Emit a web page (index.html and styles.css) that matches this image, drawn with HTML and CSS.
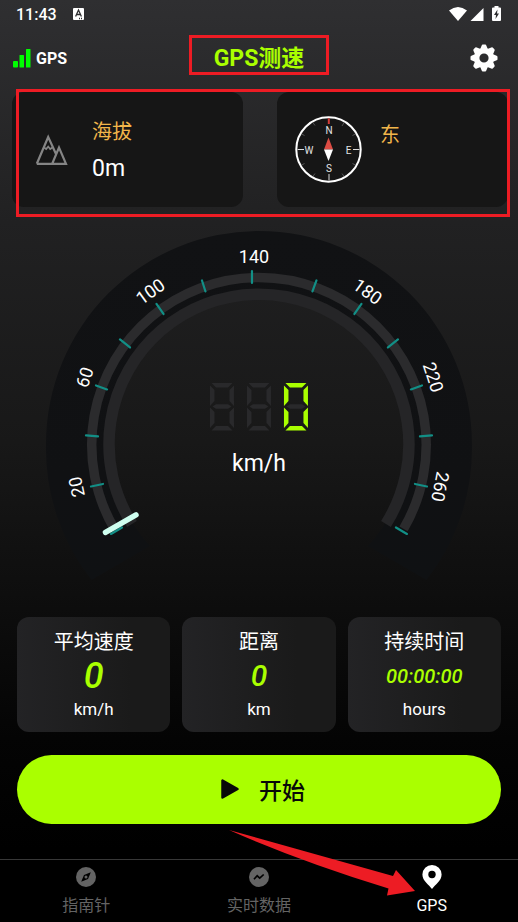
FILE: index.html
```html
<!DOCTYPE html>
<html lang="zh-CN">
<head>
<meta charset="utf-8">
<meta name="viewport" content="width=device-width, initial-scale=1">
<title>GPS测速</title>
<link rel="stylesheet" href="styles.css">
</head>
<body>
<div class="status-bar">
  <span>11:43</span>
  <svg class="status-app" width="12" height="13" viewBox="0 0 12 13" aria-hidden="true"><rect width="11" height="12" rx="1" fill="#fff"/><path d="M2.6 8.500 5.500 2l2.900 6.500M3.700 6.500h3.600M6 10.500h1m1 0h1" fill="none" stroke="#2d2d2f" stroke-width="1.300"/></svg>
  <svg class="status-icons" width="53" height="17" viewBox="0 0 53 17" aria-hidden="true" fill="#fff">
    <path d="M0 4.500Q9 -2.500 18 4.500L9 15z"/>
    <path d="M21.500 15 34.500 2v13z"/>
    <path d="M45.500 0h4v1.500h1.500q1 0 1 1V14q0 1-1 1h-7q-1 0-1-1V2.500q0-1 1-1h1.500z"/>
    <path d="M48.500 3.500 45 9h2l-.5 4L50 7.500h-2z" fill="#2d2d2f"/>
  </svg>
</div>

<header class="header">
  <div class="signal">
    <svg width="18" height="19" viewBox="0 0 18 19" aria-hidden="true" fill="#0f0"><rect y="12" width="5" height="6.500" rx="1"/><rect x="6.500" y="6" width="4.500" height="12.500" rx=".5"/><rect x="13" width="4.500" height="18.500" rx=".5"/></svg>
    <span>GPS</span>
  </div>
  <h1 class="title">GPS测速</h1>
  <button class="settings" type="button" aria-label="设置">
    <svg width="28" height="28" viewBox="-14 -14 28 28" aria-hidden="true">
      <defs><path id="tooth" d="M-4.200 -8 -2.300 -12.600Q-2 -13.500 -1.200 -13.500H1.200Q2 -13.500 2.300 -12.600L4.200 -8z"/></defs>
      <circle r="7.300" fill="none" stroke="#fff" stroke-width="5.400"/>
      <g fill="#fff"><use href="#tooth"/><use href="#tooth" transform="rotate(45)"/><use href="#tooth" transform="rotate(90)"/><use href="#tooth" transform="rotate(135)"/><use href="#tooth" transform="rotate(180)"/><use href="#tooth" transform="rotate(225)"/><use href="#tooth" transform="rotate(270)"/><use href="#tooth" transform="rotate(315)"/></g>
    </svg>
  </button>
</header>

<main>
  <section class="info">
    <article class="info-card altitude">
      <svg width="33" height="33" viewBox="0 0 33 33" aria-hidden="true" fill="none" stroke="#858585" stroke-width="2.200">
        <path d="M1.800 30.800 13.200 4 21 21M1.800 30.800H31L24 14.500 17.300 30.500" stroke-linejoin="miter"/>
        <path d="M9 14.500l2.200 1.500 2-2.500 2 2.500 2.300-1.500" stroke-width="1.700"/>
      </svg>
      <div class="info-text">
        <h2>海拔</h2>
        <p>0m</p>
      </div>
    </article>
    <article class="info-card heading">
      <svg width="67" height="67" viewBox="-33.500 -33.500 67 67" aria-hidden="true">
        <circle r="32.200" fill="none" stroke="#fff" stroke-width="2"/>
        <g stroke="#ddd" stroke-width="1"><path d="M-31 0H-24.500M31 0H24.500M.5 31V24.500"/></g>
        <g stroke="#555" stroke-width="1"><path d="M15.500 -26.800 13.500 -23.500M26.800 -15.500 24 -14M26.800 15.500 24 14M15.500 26.800 13.500 24M-15.500 -26.800-13.500 -24M-26.800 -15.500-24 -14M-26.800 15.500-24 14M-15.500 26.800-13.500 24"/></g>
        <path d="M.3 -31.200V-25.500" stroke="#d43c38" stroke-width="2"/>
        <path d="M-4.500 0 0 -12 4.500 0z" fill="#dc4b43"/><path d="M-4.500 0H4.500L0 11.500z" fill="#fff"/>
        <g class="compass-text"><text x=".5" y="-16">N</text><text x=".5" y="22">S</text><text x="-19.500" y="4.500">W</text><text x="20" y="4.500">E</text></g>
      </svg>
      <div class="info-text">
        <h2>东</h2>
      </div>
    </article>
    <div class="mark"></div>
  </section>

  <section class="gauge">
    <svg viewBox="44 229 430 352" role="img" aria-label="0 km/h">
      <defs>
        <linearGradient id="band" x1="0" y1="0" x2="0" y2="1"><stop offset="0" stop-color="#111214"/><stop offset=".7" stop-color="#101113"/><stop offset="1" stop-color="#0f1113"/></linearGradient>
        <g id="side"><path d="M0 2.500 4.500 7V18L0 23z"/><path d="M0 24.500 4.500 29V40L0 45z"/></g>
        <g id="zero">
          <path d="M1.500 0H22.500L18 4.500H6z"/><path d="M1.500 47.500H22.500L18 43H6z"/>
          <use href="#side"/><use href="#side" transform="matrix(-1 0 0 1 24 0)"/>
        </g>
        <path id="bar" d="M2.500 23.500 6 21.300H18L21.500 23.500 18 25.700H6z"/>
      </defs>
      <path d="M91.500 580A213 213 0 0 1 46 444A213 213 0 0 1 472 444A213 213 0 0 1 426.500 580L368 546A149 149 0 0 0 408 444A149 149 0 0 0 110 444A149 149 0 0 0 150 546z" fill="url(#band)"/>
      <g fill="none">
        <path d="M114.400 529A167.300 167.300 0 1 1 403.600 529" stroke="#2b2b2d" stroke-width="9.500"/>
        <path d="M132 524A150 150 0 1 1 386 524" stroke="#252527" stroke-width="11.500"/>
        <path d="M111 534 122 527.500M91 486.500 103 484M86 435.500 98 436.500M96 385.500 107 389.500M120 339.500 130 347.500M156.500 304 163.500 314M202 280.500 205.500 291.500M252 271V283M316.500 280.500 312.500 291.500M361.500 304 354.500 314M398 339.500 388 347.500M422 385.500 411 389.500M432 435.500 420 436.500M427 486.500 415 484M407 534 396 527.500" stroke="#128f86" stroke-width="2.200" stroke-linecap="round"/>
        <path d="M105.500 532.500 136 515" stroke="#cffff0" stroke-width="5.500" stroke-linecap="round"/>
      </g>
      <g class="scale">
        <text transform="translate(76 487) rotate(-102)" dy="7">20</text>
        <text transform="translate(84 377) rotate(-72)" dy="7">60</text>
        <text transform="translate(150 291) rotate(-36)" dy="7">100</text>
        <text transform="translate(254 256)" dy="7">140</text>
        <text transform="translate(368 291) rotate(36)" dy="7">180</text>
        <text transform="translate(434 377) rotate(72)" dy="7">220</text>
        <text transform="translate(441 487) rotate(101)" dy="7">260</text>
      </g>
      <g class="segment-off">
        <use href="#zero" x="210" y="383"/><use href="#bar" x="210" y="383"/>
        <use href="#zero" x="247" y="383"/><use href="#bar" x="247" y="383"/>
        <use href="#bar" x="284" y="383"/>
      </g>
      <use class="segment-on" href="#zero" x="284" y="383"/>
      <text class="unit" x="259" y="471">km/h</text>
    </svg>
  </section>

  <section class="stats">
    <article class="stat"><h2>平均速度</h2><strong class="value large">0</strong><span>km/h</span></article>
    <article class="stat"><h2>距离</h2><strong class="value medium">0</strong><span>km</span></article>
    <article class="stat"><h2>持续时间</h2><strong class="value">00:00:00</strong><span>hours</span></article>
  </section>

  <button class="start" type="button">
    <svg width="20" height="22" viewBox="0 0 20 22" aria-hidden="true"><path d="M2.500 2.500v17L17.500 11z" stroke="#080808" stroke-width="2.500" stroke-linejoin="round" fill="#080808"/></svg>
    <span>开始</span>
  </button>
</main>

<nav class="tabs">
  <a href="#compass">
    <svg width="22" height="26" viewBox="0 0 22 26" aria-hidden="true"><circle cx="11" cy="13" r="10" fill="#646464"/><path d="M15.800 8.200 13 15 6.200 17.800 9 11z" fill="#000"/><circle cx="11" cy="13" r="1.500" fill="#646464"/></svg>
    <span>指南针</span>
  </a>
  <a href="#live">
    <svg width="22" height="26" viewBox="0 0 22 26" aria-hidden="true"><circle cx="11" cy="13" r="10" fill="#646464"/><path d="M6 15.300 9.200 11.800 11.700 14.200 15.700 10.500" fill="none" stroke="#000" stroke-width="1.700"/></svg>
    <span>实时数据</span>
  </a>
  <a href="#gps" class="active" aria-current="page">
    <svg width="22" height="26" viewBox="0 0 22 26" aria-hidden="true"><path d="M11 1A9.600 9.600 0 0 0 1.400 10.600C1.400 17 8 21 11 25 14 21 20.600 17 20.600 10.600A9.600 9.600 0 0 0 11 1z" fill="#fff"/><circle cx="11" cy="10.500" r="3.700" fill="#000"/></svg>
    <span>GPS</span>
  </a>
  <svg class="arrow" width="187" height="67" viewBox="0 0 187 67" aria-hidden="true"><path d="M0 0 164 46 167 40 186 61 158 65.500 159.500 58.500Q70 31 0 0z" fill="#ed1c24"/></svg>
</nav>
</body>
</html>
```
FILE: styles.css
```css
* {
  box-sizing: border-box;
}

body {
  margin: 0;
  min-height: 100vh;
  display: flex;
  flex-direction: column;
  background: linear-gradient(#2f2f31, #212122 24%, #181818 48%, #0d0d0d 66%, #040404 80%, #000 92%);
  color: #fff;
  font-family: Roboto, "Noto Sans CJK SC", sans-serif;
}

h1, h2, p {
  margin: 0;
  font-weight: 400;
}

svg {
  display: block;
  flex: none;
}

button {
  border: 0;
  padding: 0;
  background: none;
  font: inherit;
  cursor: pointer;
}

.status-bar {
  display: flex;
  align-items: center;
  height: 28px;
  padding: 0 16px;
  font-size: 16px;
  font-weight: 500;
}

.status-app {
  margin-left: 16px;
}

.status-icons {
  margin-left: auto;
}

.header {
  display: grid;
  grid-template-columns: 1fr auto 1fr;
  align-items: center;
  height: 60px;
  padding: 0 13px;
}

.signal {
  display: flex;
  align-items: center;
  gap: 5px;
  font-size: 16px;
  font-weight: 700;
}

.title {
  position: relative;
  padding-top: 2px;
  color: #af0;
  font-size: 23px;
  line-height: 30px;
  font-weight: 700;
}

.title::after {
  content: "";
  position: absolute;
  inset: -7px -25px -1px;
  border: 3px solid #ed1c24;
}

.settings {
  justify-self: end;
  margin-right: 7px;
}

.info {
  position: relative;
  display: grid;
  grid-template-columns: 1fr 1fr;
  gap: 34px;
  margin: 4px 10px 0 12px;
}

.info-card {
  display: flex;
  align-items: center;
  height: 115px;
  border-radius: 12px;
  background: #161616;
}

.altitude {
  gap: 24px;
  padding-left: 23px;
}

.heading {
  gap: 18px;
  padding-left: 18px;
}

.info-text {
  align-self: stretch;
  padding-top: 24px;
  font-size: 23px;
  line-height: 42px;
}

.info-text h2 {
  color: #f1b54a;
  font-size: 20px;
  line-height: 32px;
}

.heading .info-text {
  padding-top: 27px;
}

.mark {
  position: absolute;
  inset: -3px -2px -10px 4px;
  border: 3px solid #ed1c24;
  pointer-events: none;
}

.compass-text {
  fill: #e4e4e4;
  font-size: 10px;
  text-anchor: middle;
}

.gauge {
  margin-top: 22px;
}

.gauge svg {
  width: 83%;
  max-width: 560px;
  margin: 0 auto;
}

.scale {
  fill: #fff;
  font-size: 18px;
  text-anchor: middle;
}

.segment-off {
  fill: #29292b;
}

.segment-on {
  fill: #af0;
}

.unit {
  fill: #fff;
  font-size: 23px;
  text-anchor: middle;
}

.stats {
  display: grid;
  grid-template-columns: repeat(3, 1fr);
  gap: 12px;
  margin: 36px 17px 0;
}

.stat {
  display: flex;
  flex-direction: column;
  align-items: center;
  height: 115px;
  padding-top: 10px;
  border-radius: 12px;
  background: linear-gradient(90deg, #232325, #1a1a1a 75%);
  font-size: 17px;
  line-height: 28px;
}

.stat h2 {
  font-size: 20px;
  line-height: 30px;
}

.value {
  color: #af0;
  font-size: 20px;
  line-height: 38px;
  font-style: italic;
  font-weight: 500;
}

.value.medium {
  font-size: 30px;
}

.value.large {
  font-size: 36px;
}

.start {
  display: flex;
  align-items: center;
  justify-content: center;
  gap: 19px;
  width: calc(100% - 34px);
  height: 69px;
  margin: 23px 17px 0;
  padding-left: 7px;
  border-radius: 35px;
  background: #af0;
  color: #080808;
  font-size: 23px;
  font-weight: 500;
}

.tabs {
  position: relative;
  display: grid;
  grid-template-columns: repeat(3, 1fr);
  height: 63px;
  margin-top: auto;
  border-top: 1px solid #383838;
  background: #000;
}

.tabs a {
  display: flex;
  flex-direction: column;
  align-items: center;
  gap: 4px;
  padding-top: 4px;
  color: #646464;
  font-size: 16px;
  line-height: 24px;
  text-decoration: none;
}

.tabs a.active {
  color: #fff;
}

.arrow {
  position: absolute;
  top: -30px;
  left: calc(50% - 30px);
  pointer-events: none;
}
```
